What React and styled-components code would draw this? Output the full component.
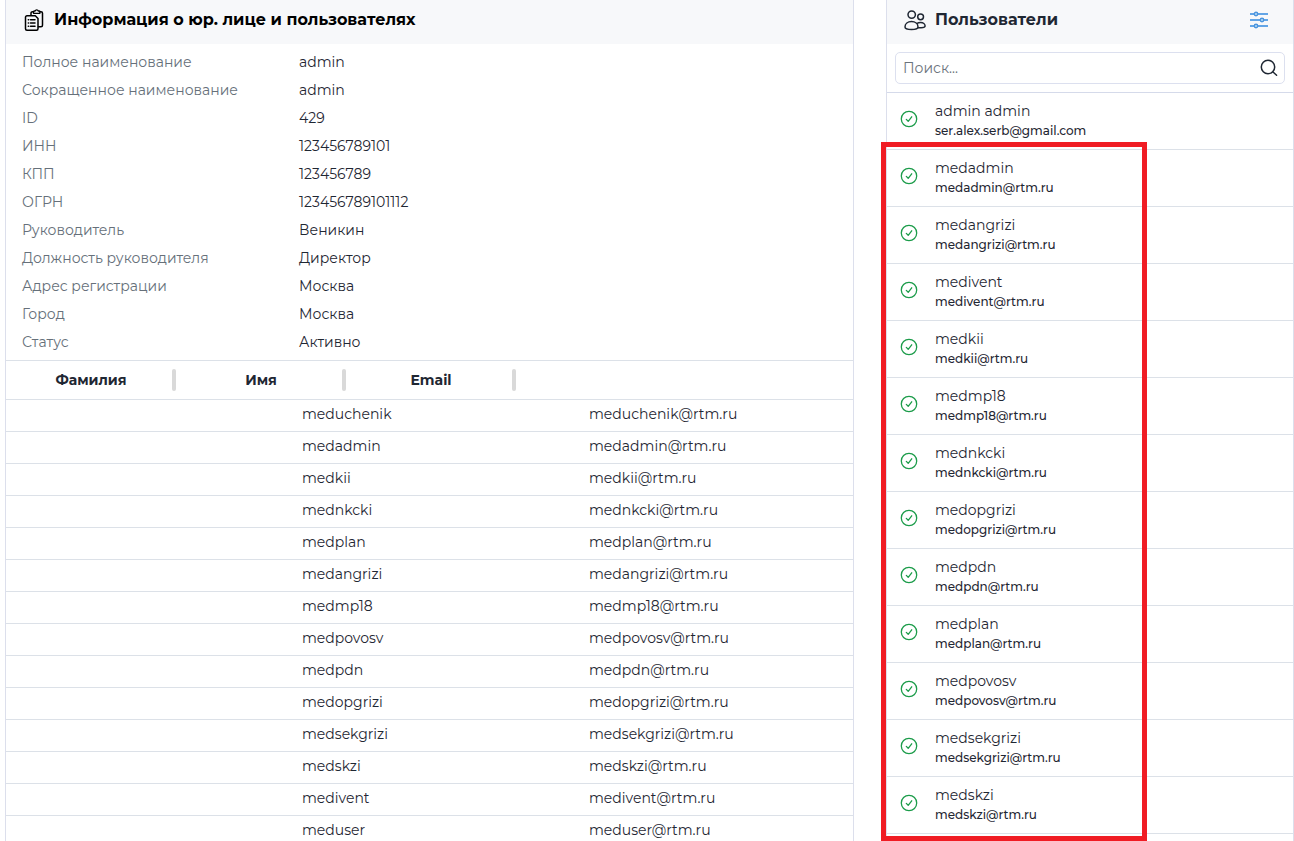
import React from "react";
import styled, { createGlobalStyle } from "styled-components";

const details = [
  ["Полное наименование", "admin"],
  ["Сокращенное наименование", "admin"],
  ["ID", "429"],
  ["ИНН", "123456789101"],
  ["КПП", "123456789"],
  ["ОГРН", "123456789101112"],
  ["Руководитель", "Веникин"],
  ["Должность руководителя", "Директор"],
  ["Адрес регистрации", "Москва"],
  ["Город", "Москва"],
  ["Статус", "Активно"],
];

const members = [
  "meduchenik",
  "medadmin",
  "medkii",
  "mednkcki",
  "medplan",
  "medangrizi",
  "medmp18",
  "medpovosv",
  "medpdn",
  "medopgrizi",
  "medsekgrizi",
  "medskzi",
  "medivent",
  "meduser",
];

const users = [
  { name: "admin admin", email: "ser.alex.serb@gmail.com" },
  { name: "medadmin", email: "medadmin@rtm.ru" },
  { name: "medangrizi", email: "medangrizi@rtm.ru" },
  { name: "medivent", email: "medivent@rtm.ru" },
  { name: "medkii", email: "medkii@rtm.ru" },
  { name: "medmp18", email: "medmp18@rtm.ru" },
  { name: "mednkcki", email: "mednkcki@rtm.ru" },
  { name: "medopgrizi", email: "medopgrizi@rtm.ru" },
  { name: "medpdn", email: "medpdn@rtm.ru" },
  { name: "medplan", email: "medplan@rtm.ru" },
  { name: "medpovosv", email: "medpovosv@rtm.ru" },
  { name: "medsekgrizi", email: "medsekgrizi@rtm.ru" },
  { name: "medskzi", email: "medskzi@rtm.ru" },
];

const ClipboardIcon = () => (
  <svg width="22" height="22" viewBox="0 0 22 22" fill="none" stroke="currentColor" strokeWidth="1.5" strokeLinejoin="round" strokeLinecap="round">
    <path d="M8 6V4.200C8 3.300 8.700 2.700 9.500 2.700H10.500M17 2.700h1c.9 0 1.500.6 1.500 1.500v12c0 .9-.6 1.500-1.500 1.500h-2.500" />
    <path d="M10.500 4.300v-1.500c0-.5.3-.8.8-.8h.8c.2-.7.800-1.200 1.600-1.200s1.400.5 1.600 1.200h.8c.5 0 .8.3.8.8v1.500Z" strokeWidth="1.300" />
    <path d="M4 6.800h8.300L15 9.500v10.200c0 .9-.6 1.500-1.500 1.500H4c-.9 0-1.500-.6-1.500-1.500V8.300c0-.9.600-1.500 1.500-1.500Z" />
    <path d="M5.300 10.700h.3M7.500 10.700h4.500M5.300 14h.3M7.500 14h4.500M5.300 17.300h.3M7.500 17.300h4.500" />
  </svg>
);

const PeopleIcon = () => (
  <svg width="22" height="21" viewBox="0 0 22 21" fill="none" stroke="currentColor" strokeWidth="1.5" strokeLinejoin="round">
    <circle cx="7.700" cy="4.600" r="3.700" />
    <circle cx="16.600" cy="6.800" r="2.900" />
    <path d="M1 17c0-3.400 2.800-5.400 6.500-5.400s6.500 2 6.500 5.400c0 1.800-2.600 2.500-6.500 2.500S1 18.800 1 17Z" />
    <path d="M12.800 13.600c1-.8 2.300-1.200 3.800-1.200 2.700 0 4.500 1.700 4.500 3.600 0 1.200-1.600 1.700-4 1.700h-3.300" />
  </svg>
);

const FiltersIcon = () => (
  <svg width="18" height="18" viewBox="0 0 18 18" fill="#b9dcf5" stroke="#4a94de">
    <path d="M0 3h18M0 9h18M0 15h18" stroke="#63a5e6" strokeWidth="2" />
    <circle cx="6" cy="3" r="1.700" strokeWidth="1.400" />
    <circle cx="12" cy="9" r="1.700" strokeWidth="1.400" />
    <circle cx="6" cy="15" r="1.700" strokeWidth="1.400" />
  </svg>
);

const SearchIcon = () => (
  <svg width="18" height="18" viewBox="0 0 18 18" fill="none" stroke="currentColor" strokeWidth="1.500" strokeLinecap="round">
    <circle cx="8" cy="8" r="6.700" />
    <path d="m13 13 3.600 3.200" />
  </svg>
);

const CheckIcon = () => (
  <svg width="18" height="18" viewBox="0 0 18 18" fill="none" stroke="#1c9c4a">
    <circle cx="9" cy="9" r="7.700" strokeWidth="1.300" />
    <path d="m6.300 9.400 1.900 1.900 3.500-4.500" strokeWidth="1.300" strokeLinecap="round" strokeLinejoin="round" />
  </svg>
);

const App = () => {
  return (
    <>
      <GlobalStyle />
      <Page>
        <Panel>
          <PanelHeader $dark>
            <ClipboardIcon />
            <h2>Информация о юр. лице и пользователях</h2>
          </PanelHeader>
          <Details>
            {details.map(([label, value]) => (
              <DetailRow key={label}>
                <dt>{label}</dt>
                <dd>{value}</dd>
              </DetailRow>
            ))}
          </Details>
          <MembersTable>
            <thead>
              <HeadRow>
                <th>Фамилия</th>
                <th>Имя</th>
                <th>Email</th>
              </HeadRow>
            </thead>
            <tbody>
              {members.map((name) => (
                <MemberRow key={name}>
                  <td></td>
                  <td>{name}</td>
                  <td>{name}@rtm.ru</td>
                </MemberRow>
              ))}
            </tbody>
          </MembersTable>
        </Panel>

        <Panel as="aside">
          <PanelHeader>
            <PeopleIcon />
            <h2>Пользователи</h2>
            <IconButton type="button" aria-label="Фильтры">
              <FiltersIcon />
            </IconButton>
          </PanelHeader>
          <SearchBar>
            <SearchBox>
              <input type="text" placeholder="Поиск..." aria-label="Поиск" />
              <IconButton type="button" aria-label="Найти">
                <SearchIcon />
              </IconButton>
            </SearchBox>
          </SearchBar>
          <UsersArea>
            <UserList>
              {users.map((user) => (
                <UserRow key={user.email}>
                  <CheckIcon />
                  <div>
                    <UserName>{user.name}</UserName>
                    <UserEmail>{user.email}</UserEmail>
                  </div>
                </UserRow>
              ))}
            </UserList>
            <Highlight />
          </UsersArea>
        </Panel>
      </Page>
    </>
  );
};

export default App;

const GlobalStyle = createGlobalStyle`
  * {
    box-sizing: border-box;
  }
  body {
    margin: 0;
    background: #fff;
    color: #1f2733;
    font-family: Montserrat, Inter, "Noto Sans", sans-serif;
    font-size: 14px;
    line-height: 20px;
  }
  h2, p, dl, dd, ul {
    margin: 0;
    padding: 0;
  }
`;

const Page = styled.main`
  display: grid;
  grid-template-columns: minmax(0, 1fr) 408px;
  gap: 32px;
  height: 100vh;
  padding-left: 5px;
  overflow: hidden;
`;

const Panel = styled.section`
  display: flex;
  flex-direction: column;
  min-height: 0;
  border: 1px solid #dcdfec;
  border-width: 0 1px;
`;

const PanelHeader = styled.header`
  display: flex;
  flex: none;
  align-items: center;
  gap: 9px;
  height: 44px;
  padding: 0 25px 4px 17px;
  background: #f7f8fa;
  color: ${(props) => (props.$dark ? "#000" : "#1f2733")};

  h2 {
    font-size: 16px;
    font-weight: 700;
  }
`;

const IconButton = styled.button`
  display: flex;
  margin-left: auto;
  padding: 0;
  border: 0;
  background: none;
  color: inherit;
  cursor: pointer;
`;

const Details = styled.dl`
  padding: 4px 16px;
`;

const DetailRow = styled.div`
  display: grid;
  grid-template-columns: 277px 1fr;
  line-height: 28px;

  dt {
    color: #66707a;
  }
`;

const MembersTable = styled.table`
  display: block;
  border-top: 1px solid #dce1e8;

  thead,
  tbody {
    display: block;
  }
`;

const HeadRow = styled.tr`
  display: grid;
  grid-template-columns: repeat(3, 170px);
  align-items: center;
  height: 39px;
  border-bottom: 1px solid #dce1e8;

  th {
    display: grid;
    grid-template-columns: 1fr 4px;
    padding: 0 0 0 4px;
    font-weight: 700;
    line-height: 22px;
  }
  th::after {
    content: "";
    border-radius: 2px;
    background: #d9d9d9;
  }
`;

const MemberRow = styled.tr`
  display: grid;
  grid-template-columns: 287px 287px 1fr;
  height: 32px;
  border-bottom: 1px solid #dce1e8;

  td {
    padding: 4px 9px;
  }
`;

const SearchBar = styled.div`
  flex: none;
  padding: 8px;
  border-bottom: 1px solid #d5daea;
`;

const SearchBox = styled.div`
  display: flex;
  align-items: center;
  height: 32px;
  padding: 0 6px;
  border: 1px solid #dce0ef;
  border-radius: 5px;

  input {
    flex: 1;
    min-width: 0;
    padding: 0 1px;
    border: 0;
    outline: 0;
    background: none;
    color: inherit;
    font: inherit;
  }
  input::placeholder {
    color: #6b737c;
    opacity: 1;
  }
`;

const UsersArea = styled.div`
  position: relative;
  flex: 1;
  min-height: 0;
`;

const UserList = styled.ul`
  height: 100%;
  overflow: hidden;
  list-style: none;
`;

const UserRow = styled.li`
  display: flex;
  align-items: flex-start;
  gap: 17px;
  height: 57px;
  padding: 8px 13px;
  border-bottom: 1px solid #dce1e8;

  svg {
    margin-top: 9px;
  }
`;

const UserName = styled.p`
  line-height: 20px;
`;

const UserEmail = styled.p`
  font-size: 12px;
  font-weight: 500;
  line-height: 20px;
`;

const Highlight = styled.div`
  position: absolute;
  top: 49px;
  bottom: 0;
  left: -6px;
  width: 266px;
  border: 5px solid #f01c24;
  pointer-events: none;
`;
